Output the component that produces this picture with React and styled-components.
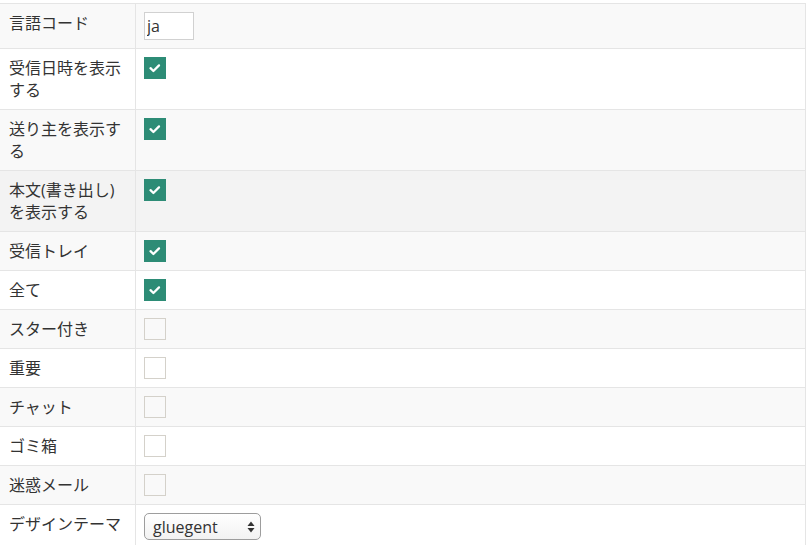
import React from "react";
import styled, { createGlobalStyle } from "styled-components";

const GlobalStyle = createGlobalStyle`
  html, body {
    margin: 0;
    padding: 0;
    background: #fff;
  }
  body {
    font-family: "Open Sans", "Noto Sans CJK JP", sans-serif;
    color: #333;
  }
`;

const rows = [
  { label: "言語コード", type: "text", value: "ja" },
  { label: "受信日時を表示する", type: "check", checked: true },
  { label: "送り主を表示する", type: "check", checked: true },
  { label: "本文(書き出し)を表示する", type: "check", checked: true, hover: true },
  { label: "受信トレイ", type: "check", checked: true },
  { label: "全て", type: "check", checked: true },
  { label: "スター付き", type: "check" },
  { label: "重要", type: "check" },
  { label: "チャット", type: "check" },
  { label: "ゴミ箱", type: "check" },
  { label: "迷惑メール", type: "check" },
  { label: "デザインテーマ", type: "select", value: "gluegent" },
];

const Page = styled.div`
  padding-top: 3px;
`;

const Table = styled.div`
  width: 806px;
  box-sizing: border-box;
  border-top: 1px solid #e5e5e5;
  border-right: 1px solid #e5e5e5;
`;

const Row = styled.div`
  display: grid;
  grid-template-columns: 136px 1fr;
  border-bottom: 1px solid #e5e5e5;
  background: ${(p) => (p.$hover ? "#f3f3f3" : p.$odd ? "#f9f9f9" : "#fff")};
`;

const Label = styled.div`
  box-sizing: border-box;
  padding: 8px 10px 8px 9px;
  border-right: 1px solid #e5e5e5;
  font-size: 16px;
  line-height: 22px;
  color: #333;
`;

const Field = styled.div`
  padding: 8px;
  display: flex;
  align-items: flex-start;
`;

const TextInput = styled.input`
  box-sizing: border-box;
  width: 50px;
  height: 28px;
  margin: 0;
  padding: 3px 4px 4px 2px;
  border: 1px solid #d1d1d1;
  background: #fff;
  font-family: "Open Sans", sans-serif;
  font-size: 16px;
  color: #333;
  outline: none;
`;

const Box = styled.span`
  box-sizing: border-box;
  display: flex;
  align-items: center;
  justify-content: center;
  width: 22px;
  height: 22px;
  border: ${(p) => (p.$checked ? "none" : "1px solid #d4d1ca")};
  background: ${(p) => (p.$checked ? "#2d8c76" : "transparent")};
`;

const Select = styled.div`
  box-sizing: border-box;
  display: flex;
  align-items: center;
  justify-content: space-between;
  width: 117px;
  height: 27px;
  padding: 0 5px 0 8px;
  border: 1px solid #9d9d9d;
  border-radius: 5px;
  background: linear-gradient(#ffffff, #f2f2f2);
  font-family: "Open Sans", sans-serif;
  font-size: 16px;
  color: #333;
`;

const Check = () => (
  <svg width="22" height="22" viewBox="0 0 22 22">
    <polyline
      points="6.5,11.2 9.4,14 15,8.4"
      fill="none"
      stroke="#fff"
      strokeWidth="2.3"
      strokeLinecap="round"
      strokeLinejoin="round"
    />
  </svg>
);

const Arrows = () => (
  <svg width="8" height="12" viewBox="0 0 8 12">
    <path d="M4 0.5 L7.5 5 L0.5 5 Z" fill="#333" />
    <path d="M4 11.5 L7.5 7 L0.5 7 Z" fill="#333" />
  </svg>
);

const renderField = (row) => {
  if (row.type === "text") return <TextInput defaultValue={row.value} />;
  if (row.type === "select")
    return (
      <Select>
        <span>{row.value}</span>
        <Arrows />
      </Select>
    );
  return <Box $checked={row.checked}>{row.checked && <Check />}</Box>;
};

const App = () => {
  return (
    <Page>
      <GlobalStyle />
      <Table>
        {rows.map((row, i) => (
          <Row key={row.label} $odd={i % 2 === 0} $hover={row.hover}>
            <Label>{row.label}</Label>
            <Field>{renderField(row)}</Field>
          </Row>
        ))}
      </Table>
    </Page>
  );
};

export default App;
